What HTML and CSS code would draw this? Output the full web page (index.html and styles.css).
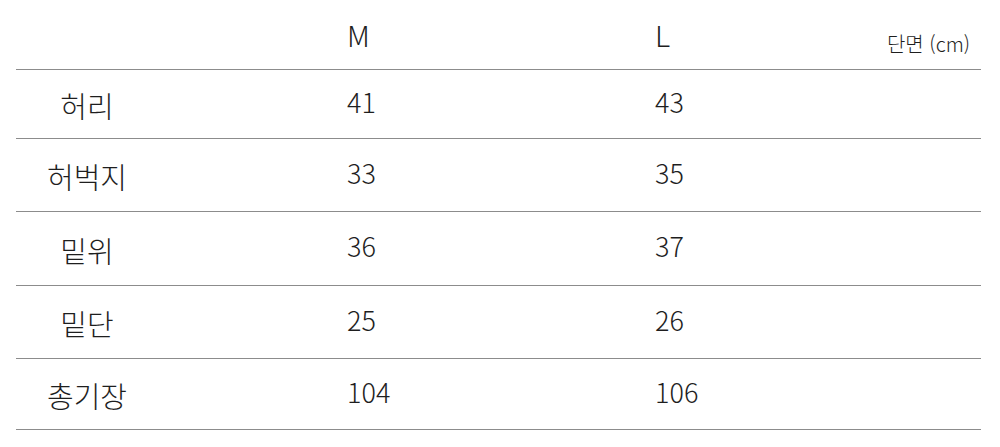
FILE: index.html
```html
<!DOCTYPE html>
<html lang="ko">
<head>
<meta charset="utf-8">
<link rel="stylesheet" href="styles.css">
</head>
<body>
<div class="table">
  <div class="row head">
    <div class="c1"></div>
    <div class="c2">M</div>
    <div class="c3"><span>L</span><span class="unit">단면 (cm)</span></div>
  </div>
  <div class="row r1">
    <div class="c1"><span class="label">허리</span></div>
    <div class="c2">41</div>
    <div class="c3">43</div>
  </div>
  <div class="row r2">
    <div class="c1"><span class="label">허벅지</span></div>
    <div class="c2">33</div>
    <div class="c3">35</div>
  </div>
  <div class="row r3">
    <div class="c1"><span class="label">밑위</span></div>
    <div class="c2">36</div>
    <div class="c3">37</div>
  </div>
  <div class="row r4">
    <div class="c1"><span class="label">밑단</span></div>
    <div class="c2">25</div>
    <div class="c3">26</div>
  </div>
  <div class="row r5">
    <div class="c1"><span class="label">총기장</span></div>
    <div class="c2">104</div>
    <div class="c3">106</div>
  </div>
</div>
</body>
</html>
```
FILE: styles.css
```css
html, body {
  margin: 0;
  padding: 0;
  background: #fff;
}
body {
  font-family: "Noto Sans CJK KR", "Noto Sans", sans-serif;
  font-weight: 300;
  color: #1e1e1e;
}
.table {
  margin-left: 16px;
  width: 965px;
}
.row {
  display: grid;
  grid-template-columns: 331px 308px 1fr;
  align-items: center;
  border-bottom: 1px solid #8c8c8c;
  font-size: 27px;
  line-height: 1;
}
.row .c2, .row .c3 { padding-bottom: 6px; }
.head { height: 69px; align-items: end; }
.head .c2, .head .c3 { padding-bottom: 0; }
.head .c2, .head .c3 > span:first-child { padding-bottom: 20px; font-size: 29px; }
.r1 { height: 68px; }
.r2 { height: 72px; }
.r3 { height: 73px; }
.r4 { height: 72px; }
.r5 { height: 70px; }
.c3 {
  display: flex;
  justify-content: space-between;
  align-items: flex-end;
}
.unit {
  font-size: 20px;
  padding-right: 11px;
  padding-bottom: 15px;
}
.label {
  display: block;
  width: 142px;
  text-align: center;
  padding-top: 3px;
  font-size: 29px;
}
```
